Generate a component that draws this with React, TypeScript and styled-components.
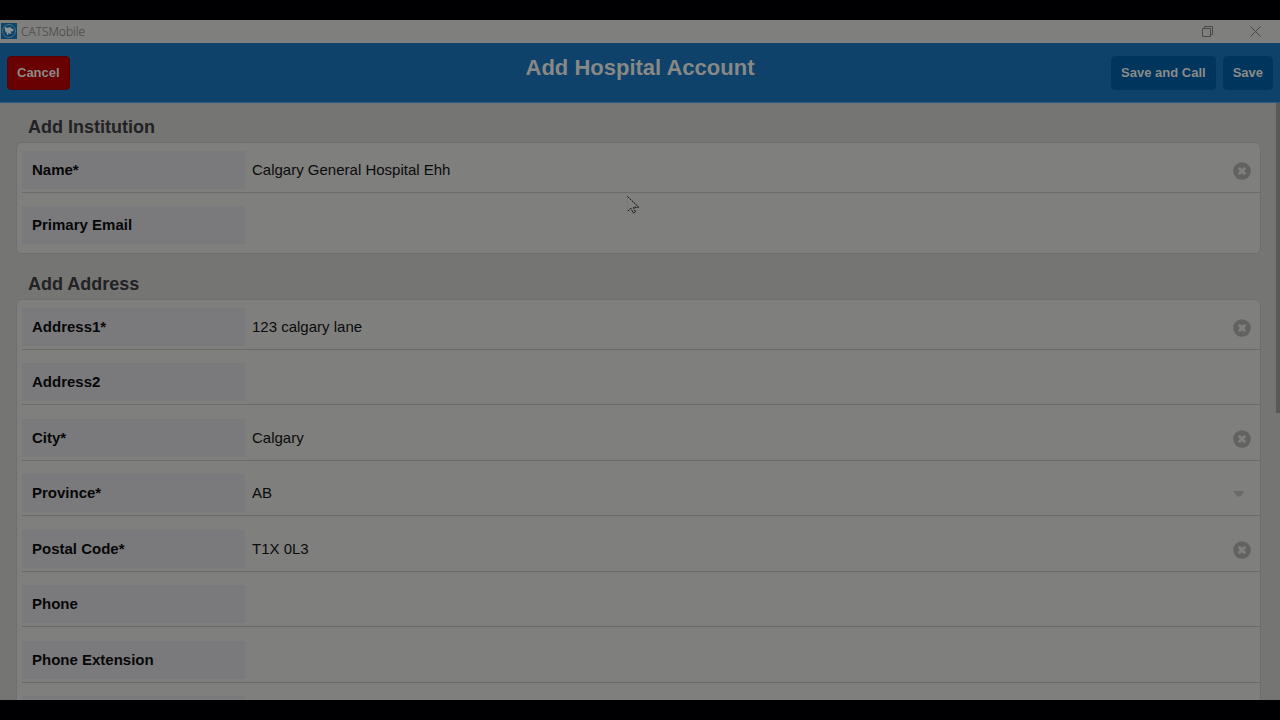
import React from "react";
import styled, { createGlobalStyle } from "styled-components";

const GlobalStyle = createGlobalStyle`
  * { box-sizing: border-box; }
  body {
    margin: 0;
    background: #000;
    font-family: "Liberation Sans", Arial, sans-serif;
  }
`;

const Screen = styled.div`
  position: relative;
  display: flex;
  flex-direction: column;
  height: 100vh;
  padding: 20px 0;
  background: #000002;
`;

const TitleBar = styled.div`
  display: flex;
  align-items: center;
  flex: none;
  height: 23px;
  padding: 0 17px 1px 1px;
  gap: 4px;
  background: #7f7f7d;
  color: #3c3c3b;
  font: 300 12px/16px "Open Sans", sans-serif;
`;

const AppName = styled.span`
  flex: 1;
  padding-top: 1px;
`;

const WindowButton = styled.button`
  display: flex;
  align-items: center;
  justify-content: center;
  width: 16px;
  height: 16px;
  margin-left: 28px;
  padding: 0;
  border: 0;
  background: none;
  color: #4a4a49;
`;

const Header = styled.header`
  display: grid;
  grid-template-columns: 1fr auto 1fr;
  align-items: start;
  flex: none;
  height: 60px;
  padding: 13px 7px 0;
  border-bottom: 1px solid #2a5a7c;
  background: #0e426b;
`;

const PageTitle = styled.h1`
  margin: 0;
  color: #888885;
  font-size: 22px;
  line-height: 23px;
`;

const Actions = styled.div<{ $end?: boolean }>`
  display: flex;
  gap: 7px;
  justify-content: ${(p) => (p.$end ? "flex-end" : "flex-start")};
`;

const ActionButton = styled.button<{ $danger?: boolean }>`
  height: 34px;
  padding: 0 9px;
  border: 1px solid ${(p) => (p.$danger ? "#540509" : "#05365a")};
  border-radius: 4px;
  background: ${(p) => (p.$danger ? "#690002" : "#00365e")};
  color: #8b8b89;
  font: bold 13px/16px "Liberation Sans", Arial, sans-serif;
`;

const Body = styled.div`
  display: flex;
  flex: 1;
  min-height: 0;
  background: #757573;
`;

const Form = styled.form`
  flex: 1;
  padding: 12px 15px 0 16px;
  overflow: hidden;
`;

const ScrollThumb = styled.div`
  width: 4px;
  height: 52%;
  background: #595957;
`;

const Section = styled.section`
  margin-bottom: 18px;
`;

const SectionTitle = styled.h2`
  margin: 0;
  padding: 0 12px 3px;
  color: #222224;
  font-size: 18px;
  line-height: 24px;
`;

const Row = styled.div`
  display: flex;
  align-items: center;
  padding: 14px 0 3px;
  border-bottom: 1px solid #6b6b6a;

  &:nth-child(even) { padding-top: 13px; }
  &:first-child { padding-top: 8px; }
  &:last-child { padding-bottom: 9px; border-bottom: 0; }
`;

const Card = styled.div`
  padding: 0 0 0 5px;
  border: 1px solid #6f6f70;
  border-radius: 6px;
  background: #7f7f7d;
`;

const Label = styled.label`
  flex: none;
  width: 223px;
  height: 38px;
  padding-left: 10px;
  background: #7a7a7d;
  color: #070707;
  font-size: 15px;
  font-weight: bold;
  line-height: 38px;
`;

const fieldText = `
  flex: 1;
  min-width: 0;
  height: 38px;
  padding: 0 7px 2px;
  border: 0;
  background: none;
  color: #0b0b0b;
  font: 15px/20px "Liberation Sans", Arial, sans-serif;
  outline: 0;
`;

const TextInput = styled.input`${fieldText}`;

const Select = styled.select`
  ${fieldText}
  padding-bottom: 0;
  appearance: none;
`;

const ClearButton = styled.button`
  display: flex;
  margin-right: 9px;
  padding: 2px 0 0;
  border: 0;
  background: none;
`;

const SelectArrow = styled.span`
  display: flex;
  margin-right: 15px;
  padding-top: 2px;
`;

const Pointer = styled.svg`
  position: absolute;
  left: 49%;
  top: 196px;
  pointer-events: none;
`;

function AppLogo() {
  return (
    <svg width="16" height="16" viewBox="0 0 16 16" aria-hidden="true">
      <rect width="16" height="16" fill="#0c4569" />
      <circle cx="8" cy="8" r="6.5" fill="none" stroke="#4a7186" strokeWidth="1" />
      <path
        d="M3.6 3.6 5.6 4.8 8 4.6l1.4-.6.6 1 2.6 1.6-.4 1.6-2.6.4 1 1.6-1.4.8-1.6-1.2-.4 2.4-1.4-1-.4-2-1.2-1z"
        fill="#8b9394"
      />
    </svg>
  );
}

function ClearIcon() {
  return (
    <svg width="18" height="18" viewBox="0 0 18 18" aria-hidden="true">
      <circle cx="9" cy="9" r="8.8" fill="#626260" />
      <path d="M5.8 5.8l6.4 6.4M12.2 5.8l-6.4 6.4" stroke="#7f7f7d" strokeWidth="3" />
    </svg>
  );
}

type FieldData = { id: string; label: string; value?: string; kind?: "select" };

const sections: { title: string; fields: FieldData[] }[] = [
  {
    title: "Add Institution",
    fields: [
      { id: "name", label: "Name*", value: "Calgary General Hospital Ehh" },
      { id: "email", label: "Primary Email" },
    ],
  },
  {
    title: "Add Address",
    fields: [
      { id: "address1", label: "Address1*", value: "123 calgary lane" },
      { id: "address2", label: "Address2" },
      { id: "city", label: "City*", value: "Calgary" },
      { id: "province", label: "Province*", value: "AB", kind: "select" },
      { id: "postal", label: "Postal Code*", value: "T1X 0L3" },
      { id: "phone", label: "Phone" },
      { id: "extension", label: "Phone Extension" },
      { id: "more", label: "" },
    ],
  },
];

function Field({ id, label, value, kind }: FieldData) {
  return (
    <Row>
      <Label htmlFor={id}>{label}</Label>
      {kind === "select" ? (
        <>
          <Select id={id} defaultValue={value}>
            <option>{value}</option>
          </Select>
          <SelectArrow>
            <svg width="12" height="6" viewBox="0 0 12 6" aria-hidden="true">
              <path d="M0.5 0h11L7.5 5.5h-3z" fill="#6a6a69" />
            </svg>
          </SelectArrow>
        </>
      ) : (
        <>
          <TextInput id={id} type="text" defaultValue={value} />
          {value && (
            <ClearButton type="button" aria-label={`Clear ${label}`}>
              <ClearIcon />
            </ClearButton>
          )}
        </>
      )}
    </Row>
  );
}

export default function App() {
  return (
    <Screen>
      <GlobalStyle />
      <TitleBar>
        <AppLogo />
        <AppName>CATSMobile</AppName>
        <WindowButton aria-label="Restore">
          <svg width="11" height="11" viewBox="0 0 11 11" fill="none" stroke="currentColor">
            <path d="M.5 2.5h8v8h-8zM2.5 2.5v-2h8v8h-2" />
          </svg>
        </WindowButton>
        <WindowButton aria-label="Close">
          <svg width="11" height="11" viewBox="0 0 11 11" fill="none" stroke="currentColor">
            <path d="M.5.5l10 10M10.5.5l-10 10" />
          </svg>
        </WindowButton>
      </TitleBar>
      <Header>
        <Actions>
          <ActionButton type="button" $danger>Cancel</ActionButton>
        </Actions>
        <PageTitle>Add Hospital Account</PageTitle>
        <Actions $end>
          <ActionButton type="button">Save and Call</ActionButton>
          <ActionButton type="button">Save</ActionButton>
        </Actions>
      </Header>
      <Body>
        <Form>
          {sections.map((section) => (
            <Section key={section.title}>
              <SectionTitle>{section.title}</SectionTitle>
              <Card>
                {section.fields.map((field) => (
                  <Field key={field.id} {...field} />
                ))}
              </Card>
            </Section>
          ))}
        </Form>
        <ScrollThumb />
      </Body>
      <Pointer width="13" height="19" viewBox="0 0 13 19" aria-hidden="true">
        <path d="M.5.5v15l3.3-3.2 2.4 5 2.3-1-2.3-5h5.3z" fill="#80807d" stroke="#6f6f6d" strokeWidth=".5" />
        <path d="M.5.5l11.3 10.8H6.4l2.2 4.6-2.3 1.1-2.4-4.7L.5 15.5" fill="none" stroke="#111" strokeDasharray="2 1" />
      </Pointer>
    </Screen>
  );
}
